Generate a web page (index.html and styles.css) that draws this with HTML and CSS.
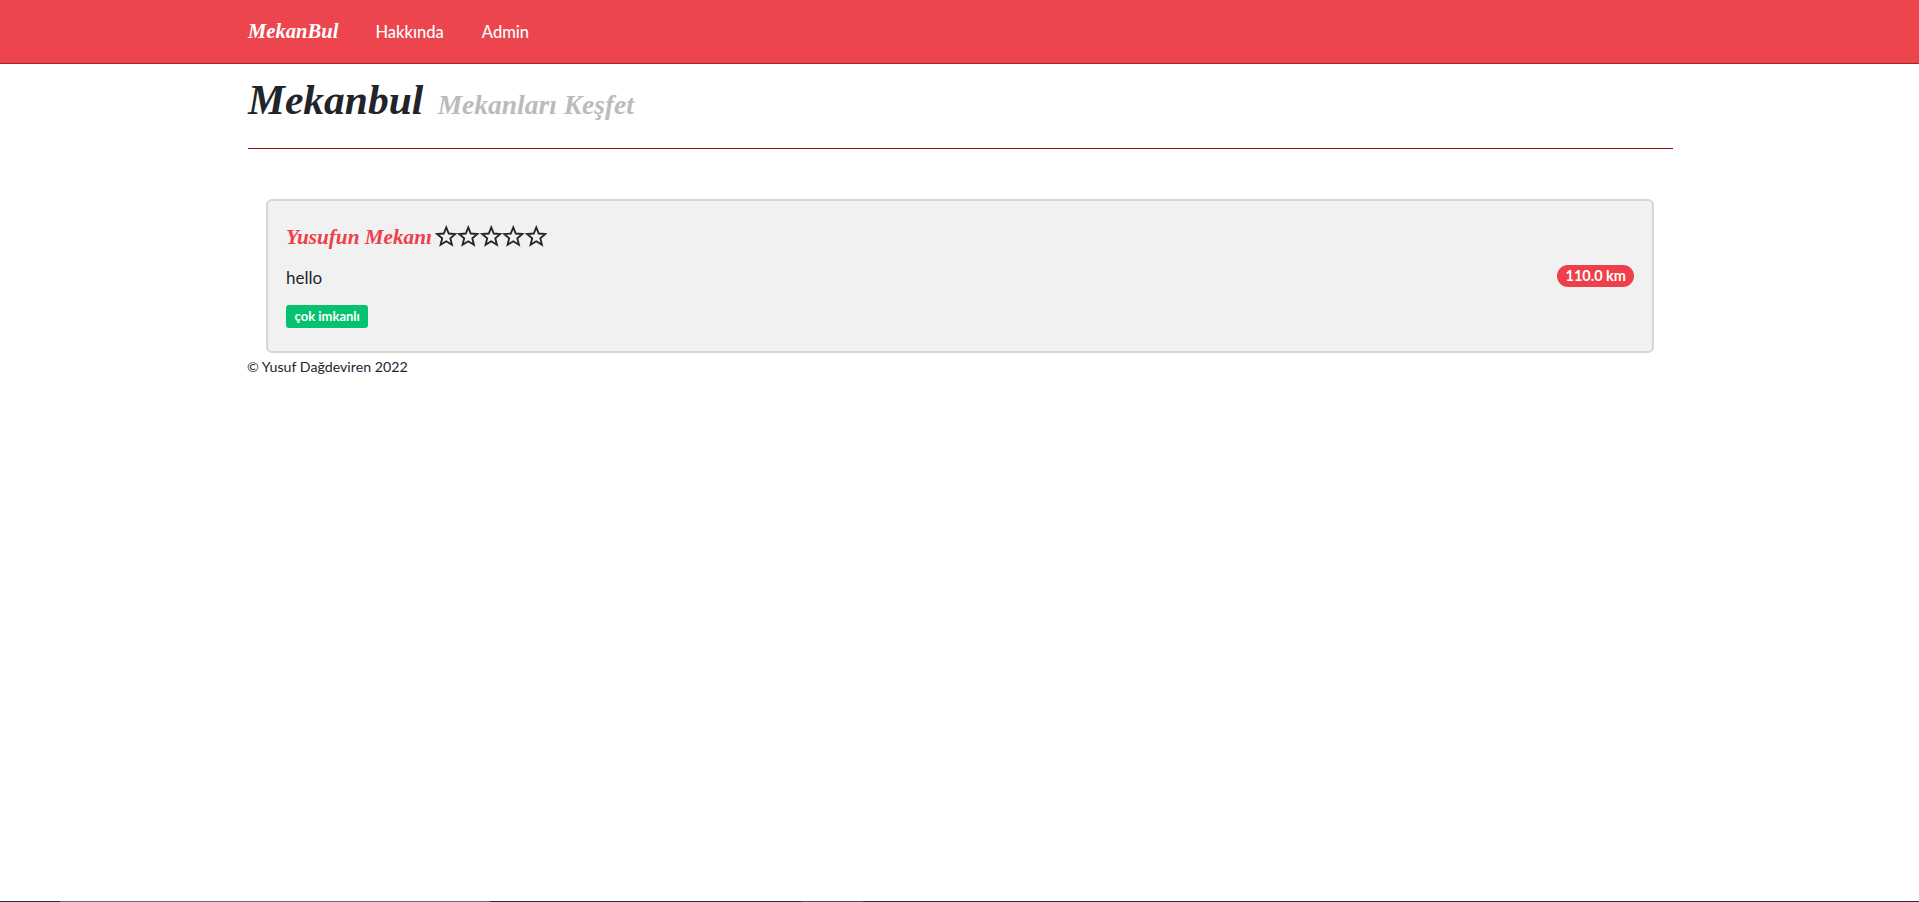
FILE: index.html
```html
<!DOCTYPE html>
<html lang="tr">
<head>
    <meta charset="UTF-8">
    <meta name="viewport" content="width=device-width, initial-scale=1.0">
    <title>Mekanbul</title>
    <link rel="stylesheet" href="styles.css">
</head>
<body>
    <nav class="navbar">
        <div class="wrap navbar-inner">
            <a class="brand" href="#">MekanBul</a>
            <a class="nav-link" href="#">Hakkında</a>
            <a class="nav-link" href="#">Admin</a>
        </div>
    </nav>

    <div class="wrap">
        <div class="page-header">
            <h1>Mekanbul <small>Mekanları Keşfet</small></h1>
        </div>

        <div class="card">
            <div class="card-info">
                <h4 class="card-title">
                    <a href="#">Yusufun Mekanı</a>
                    <span class="stars">
                        <svg class="star" viewBox="0 0 24 24"><polygon points="12,2.6 14.7,9.3 22,9.8 16.4,14.5 18.2,21.6 12,17.7 5.8,21.6 7.6,14.5 2,9.8 9.3,9.3"/></svg>
                        <svg class="star" viewBox="0 0 24 24"><polygon points="12,2.6 14.7,9.3 22,9.8 16.4,14.5 18.2,21.6 12,17.7 5.8,21.6 7.6,14.5 2,9.8 9.3,9.3"/></svg>
                        <svg class="star" viewBox="0 0 24 24"><polygon points="12,2.6 14.7,9.3 22,9.8 16.4,14.5 18.2,21.6 12,17.7 5.8,21.6 7.6,14.5 2,9.8 9.3,9.3"/></svg>
                        <svg class="star" viewBox="0 0 24 24"><polygon points="12,2.6 14.7,9.3 22,9.8 16.4,14.5 18.2,21.6 12,17.7 5.8,21.6 7.6,14.5 2,9.8 9.3,9.3"/></svg>
                        <svg class="star" viewBox="0 0 24 24"><polygon points="12,2.6 14.7,9.3 22,9.8 16.4,14.5 18.2,21.6 12,17.7 5.8,21.6 7.6,14.5 2,9.8 9.3,9.3"/></svg>
                    </span>
                </h4>
                <p class="address">hello</p>
                <span class="tag">çok imkanlı</span>
            </div>
            <span class="distance">110.0 km</span>
        </div>

        <footer class="footer">© Yusuf Dağdeviren 2022</footer>
    </div>

    <div class="bottom-strip">
        <div class="seg seg-a"></div>
        <div class="seg seg-b"></div>
        <div class="seg seg-c"></div>
        <div class="seg seg-d"></div>
        <div class="seg seg-e"></div>
    </div>
</body>
</html>
```

FILE: styles.css
```css
* {
    box-sizing: border-box;
}

html, body {
    height: 100%;
}

body {
    margin: 0;
    background-color: #fff;
    color: #212529;
    font-family: 'Lato', 'Noto Sans', sans-serif;
    font-size: 16px;
    display: flex;
    flex-direction: column;
}

a {
    text-decoration: none;
}

.wrap {
    width: 100%;
    padding: 0 246px 0 248px;
}

.navbar {
    background-color: #ec454e;
    border-bottom: 1px solid #a8262a;
    height: 64px;
}

.navbar-inner {
    display: flex;
    align-items: center;
    height: 63px;
}

.brand {
    font-family: 'Liberation Serif', serif;
    font-style: italic;
    font-weight: bold;
    font-size: 20.6px;
    color: #fff;
    margin-right: 37px;
}

.nav-link {
    color: #fff;
    font-size: 16.5px;
    font-weight: 500;
    margin-right: 38px;
}

.page-header {
    height: 85px;
    border-bottom: 1px solid #8c1405;
    margin-bottom: 50px;
}

.page-header h1 {
    margin: 0;
    padding-top: 11px;
    font-family: 'Liberation Serif', serif;
    font-style: italic;
    font-weight: bold;
    font-size: 41.5px;
    line-height: 50px;
    color: #212529;
}

.page-header small {
    font-size: 27.5px;
    color: #bbb;
    margin-left: 4px;
}

.card {
    display: flex;
    justify-content: space-between;
    align-items: center;
    margin: 0 19px 0 18px;
    height: 154px;
    padding: 0 18px;
    background-color: #f1f1f1;
    border: 2px solid #d6d6d6;
    border-radius: 6px;
}

.card-title {
    margin: 0 0 15px;
    font-family: 'Liberation Serif', serif;
    font-style: italic;
    font-weight: bold;
    font-size: 21.2px;
    line-height: 27px;
    display: flex;
    align-items: center;
    gap: 3px;
}

.card-title a {
    color: #ee3f4a;
}

.stars {
    display: flex;
    margin-bottom: 3px;
}

.star {
    width: 22.5px;
    height: 22px;
    fill: none;
    stroke: #212529;
    stroke-width: 2;
}

.address {
    margin: 0 0 15px;
    font-size: 17px;
    line-height: 24px;
}

.tag {
    display: inline-block;
    padding: 0 8.5px;
    height: 23px;
    line-height: 23px;
    font-size: 13px;
    font-weight: bold;
    color: #fff;
    background-color: #04c26d;
    border-radius: 3px;
}

.distance {
    padding: 0 8px;
    height: 22px;
    line-height: 22px;
    font-size: 14.5px;
    font-weight: bold;
    color: #fff;
    background-color: #ee3f4a;
    border-radius: 11px;
}

.footer {
    margin-left: -1px;
    padding-top: 4px;
    font-size: 14.2px;
    line-height: 20px;
}

.bottom-strip {
    margin-top: auto;
    display: flex;
    height: 1px;
    flex-shrink: 0;
}

.seg {
    height: 1px;
    background-color: #2b3035;
}

.seg-a { width: 60px; }
.seg-b { width: 430px; background-color: #6f6f6f; }
.seg-c { width: 312px; }
.seg-d { width: 61px; background-color: #4a5157; }
.seg-e { flex: 1; }
```
